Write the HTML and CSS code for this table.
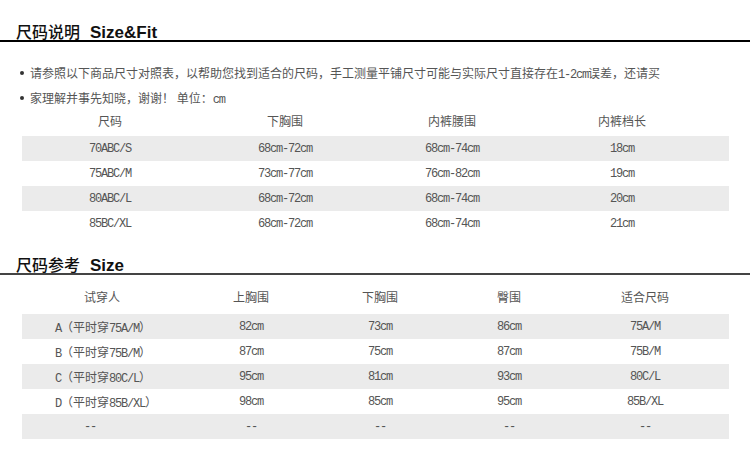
FILE: index.html
```html
<!DOCTYPE html>
<html lang="zh-CN">
<head>
<meta charset="utf-8">
<title>尺码说明</title>
<link rel="stylesheet" href="styles.css">
</head>
<body>
<div class="page">
  <h2 class="title first"><span class="zh">尺码说明</span><span class="en">Size&amp;Fit</span></h2>
  <ul class="notes">
    <li>请参照以下商品尺寸对照表，以帮助您找到适合的尺码，手工测量平铺尺寸可能与实际尺寸直接存在<span class="m">1-2cm</span>误差，还请买</li>
    <li>家理解并事先知晓，谢谢！ 单位：<span class="m">cm</span></li>
  </ul>
  <div class="tbl t1">
    <div class="row head"><div>尺码</div><div>下胸围</div><div>内裤腰围</div><div>内裤档长</div></div>
    <div class="row alt"><div>70ABC/S</div><div>68cm-72cm</div><div>68cm-74cm</div><div>18cm</div></div>
    <div class="row"><div>75ABC/M</div><div>73cm-77cm</div><div>76cm-82cm</div><div>19cm</div></div>
    <div class="row alt"><div>80ABC/L</div><div>68cm-72cm</div><div>68cm-74cm</div><div>20cm</div></div>
    <div class="row"><div>85BC/XL</div><div>68cm-72cm</div><div>68cm-74cm</div><div>21cm</div></div>
  </div>
  <h2 class="title second"><span class="zh">尺码参考</span><span class="en">Size</span></h2>
  <div class="tbl t2">
    <div class="row head"><div>试穿人</div><div>上胸围</div><div>下胸围</div><div>臀围</div><div>适合尺码</div></div>
    <div class="row alt"><div class="who">A<span class="cj">（平时穿</span>75A/M<span class="cj">）</span></div><div>82cm</div><div>73cm</div><div>86cm</div><div>75A/M</div></div>
    <div class="row"><div class="who">B<span class="cj">（平时穿</span>75B/M<span class="cj">）</span></div><div>87cm</div><div>75cm</div><div>87cm</div><div>75B/M</div></div>
    <div class="row alt"><div class="who">C<span class="cj">（平时穿</span>80C/L<span class="cj">）</span></div><div>95cm</div><div>81cm</div><div>93cm</div><div>80C/L</div></div>
    <div class="row"><div class="who">D<span class="cj">（平时穿</span>85B/XL<span class="cj">）</span></div><div>98cm</div><div>85cm</div><div>95cm</div><div>85B/XL</div></div>
    <div class="row alt"><div class="who dash">--</div><div>--</div><div>--</div><div>--</div><div>--</div></div>
  </div>
</div>
</body>
</html>
```

FILE: styles.css
```css
html, body {
  margin: 0;
  padding: 0;
  background: #fff;
}
.page {
  width: 750px;
  font-family: "Noto Sans CJK SC", sans-serif;
  color: #555;
}
.title {
  margin: 0;
  font-weight: 500;
  font-size: 16px;
  height: 18px;
  line-height: 18px;
  color: #111;
  padding-left: 16px;
  display: flex;
  align-items: baseline;
}
.title.first {
  padding-top: 22px;
  border-bottom: 2px solid #000;
}
.title.second {
  padding-top: 19px;
  border-bottom: 2px solid #444;
}
.title .en {
  font-family: "Liberation Sans", Arial, sans-serif;
  font-weight: bold;
  font-size: 17px;
  margin-left: 10px;
}
.notes {
  list-style: none;
  margin: 18px 0 0 0;
  padding: 0 0 0 30px;
  font-size: 12px;
  color: #555;
}
.notes li {
  position: relative;
  white-space: nowrap;
  height: 25px;
  line-height: 25px;
}
.notes li::before {
  content: "";
  position: absolute;
  left: -10px;
  top: 11px;
  width: 4px;
  height: 4px;
  border-radius: 50%;
  background: #333;
}
.m {
  font-family: "Liberation Mono", monospace;
  font-size: 12px;
  letter-spacing: -1.2px;
  line-height: 1;
}
.tbl {
  margin-left: 22px;
  width: 707px;
}
.row {
  display: grid;
  padding-right: 17px;
  height: 25px;
  align-items: center;
  text-align: center;
  font-family: "Liberation Mono", "Noto Sans CJK SC", monospace;
  font-size: 12px;
  letter-spacing: -1.2px;
  color: #555;
  white-space: nowrap;
}
.t1 .row {
  grid-template-columns: 176px 174px 160px 180px;
}
.t2 .row {
  grid-template-columns: 160px 138px 120px 138px 134px;
}
.row.alt {
  background: #ebebeb;
}
.row.head {
  font-family: "Noto Sans CJK SC", sans-serif;
  font-size: 12px;
  letter-spacing: 0;
  color: #555;
  background: transparent;
}
.t1 .row.head {
  height: 26px;
  align-items: start;
  line-height: 22px;
}
.t2 .row.head {
  height: 39px;
  box-sizing: border-box;
  padding-top: 11px;
  align-items: start;
  line-height: 22px;
}
.cj {
  font-family: "Noto Sans CJK SC", sans-serif;
  font-size: 12px;
  letter-spacing: 0;
}
.who {
  text-align: left;
  padding-left: 33px;
}
.who.dash {
  padding-left: 62px;
}
```
